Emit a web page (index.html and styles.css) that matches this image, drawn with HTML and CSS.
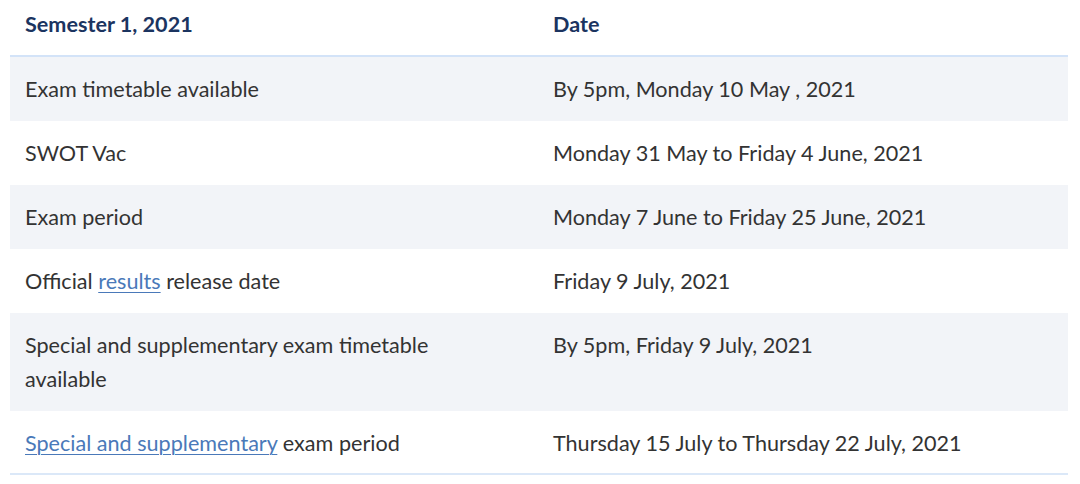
FILE: index.html
```html
<!DOCTYPE html>
<html lang="en">
<head>
<meta charset="utf-8">
<title>Semester 1, 2021</title>
<link rel="stylesheet" href="styles.css">
</head>
<body>
<div class="wrap">
<table class="dates">
  <thead>
    <tr><th class="c1">Semester 1, 2021</th><th>Date</th></tr>
  </thead>
  <tbody>
    <tr><td class="c1">Exam timetable available</td><td>By 5pm, Monday 10 May , 2021</td></tr>
    <tr><td class="c1">SWOT Vac</td><td>Monday 31 May to Friday 4 June, 2021</td></tr>
    <tr><td class="c1">Exam period</td><td>Monday 7 June to Friday 25 June, 2021</td></tr>
    <tr><td class="c1">Official <a href="#">results</a> release date</td><td>Friday 9 July, 2021</td></tr>
    <tr><td class="c1">Special and supplementary exam timetable available</td><td>By 5pm, Friday 9 July, 2021</td></tr>
    <tr><td class="c1"><a href="#">Special and supplementary</a> exam period</td><td>Thursday 15 July to Thursday 22 July, 2021</td></tr>
  </tbody>
</table>
</div>
</body>
</html>
```
FILE: styles.css
```css
html, body { margin: 0; padding: 0; background: #fff; }
.wrap { padding: 0 12px 0 10px; }
.dates {
  width: 100%;
  border-collapse: collapse;
  font-family: Lato, "Source Sans Pro", sans-serif;
  font-size: 21.6px;
  line-height: 34px;
  color: #333;
  table-layout: fixed;
}
.dates th {
  text-align: left;
  font-weight: 700;
  color: #1b3460;
  padding: 7px 15px 14px;
  border-bottom: 2px solid #d3e3f8;
}
.dates th.c1 { width: 498px; }
.dates td {
  padding: 15px 15px;
  vertical-align: top;
}
.dates td.c1 { padding-right: 40px; }
.dates tbody tr:nth-child(odd) { background: #f2f4f8; }
.dates tbody tr:last-child td { border-bottom: 2px solid #dbe8f8; padding-bottom: 13px; }
.dates a { color: #4a79b9; text-decoration: underline; text-underline-offset: 3px; text-decoration-thickness: 1px; }
```
